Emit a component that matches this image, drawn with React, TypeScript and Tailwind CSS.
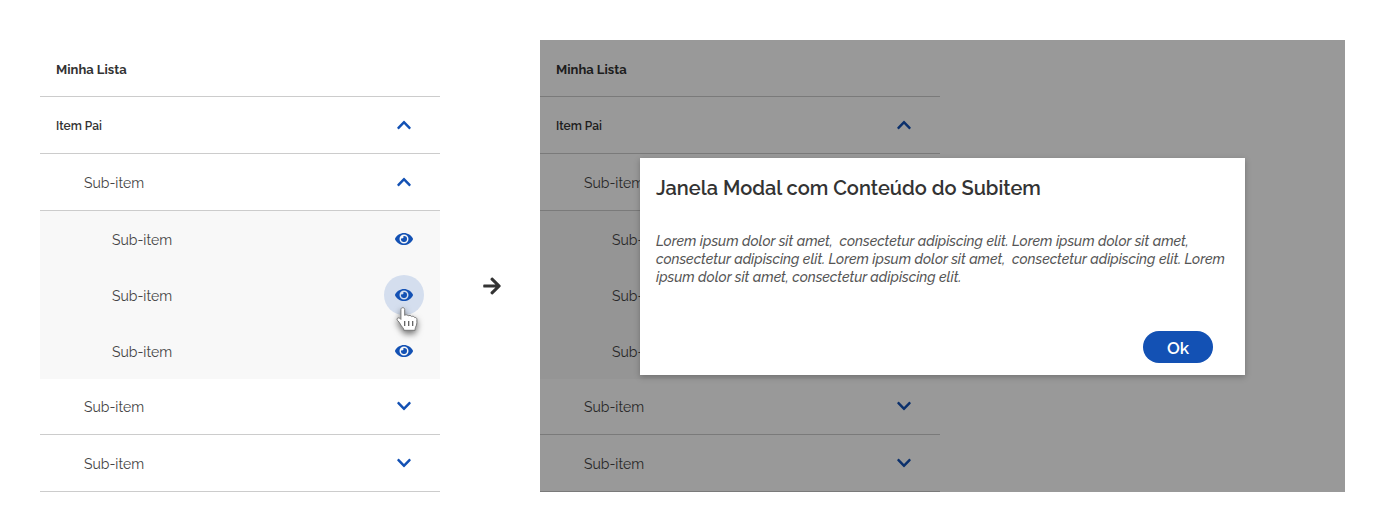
import { FaArrowRight, FaChevronDown, FaChevronUp, FaEye } from "react-icons/fa";

function HandCursor() {
  return (
    <svg
      viewBox="0 0 22 25"
      aria-hidden="true"
      className="pointer-events-none absolute top-8 left-3 h-[25px] w-[22px] drop-shadow-[0_3px_3px_rgba(0,0,0,0.55)]"
    >
      <path
        d="M4.9 2.4C4.9 1.3 5.8 .7 6.8 .7s1.9 .6 1.9 1.7V8.4c.6-.9 3-.8 3.5 .5 .7-.8 3-.6 3.5 .7 .8-.6 2.6-.3 3 1 1.1-.3 2.2 .4 2.2 1.8v3.4c0 1.8-.6 2.9-1.2 4.1-.4 .9-.6 1.7-.6 3.4H7.9c0-1.2-.5-2-1.3-2.9-1-1.2-1.7-2-2.3-3.3-.7-1.5-1.8-2.6-2.9-3.8-1.1-1.4 .3-3.1 1.9-2.3 .7 .4 1.2 .9 1.6 1.4Z"
        fill="#fff"
        stroke="#777"
        strokeWidth="1"
        strokeLinejoin="round"
      />
      <path d="M8.7 14v5M12.7 14v5M16.7 14v5" stroke="#555" strokeWidth="1.2" />
    </svg>
  );
}

function ToggleRow({
  label,
  open = false,
  className = "h-[57px] pl-11 text-sm font-normal",
}: {
  label: string;
  open?: boolean;
  className?: string;
}) {
  const Icon = open ? FaChevronUp : FaChevronDown;
  return (
    <li>
      <button
        type="button"
        aria-expanded={open}
        className={"flex w-full items-center justify-between border-b border-[#ccc] pr-7 text-left " + className}
      >
        <span className="pt-0.5">{label}</span>
        <span className="flex w-4 justify-center text-[#1351b4]">
          <Icon size={16} />
        </span>
      </button>
    </li>
  );
}

function ViewRow({ hovered = false }: { hovered?: boolean }) {
  return (
    <li className="flex h-14 items-center justify-between pr-4 pl-[72px] text-sm">
      <span className="pt-0.5">Sub-item</span>
      <div className="relative">
        <button
          type="button"
          aria-label="Visualizar sub-item"
          className={
            hovered
              ? "flex size-10 items-center justify-center rounded-full bg-[#d4deee] text-[#1351b4]"
              : "flex size-10 items-center justify-center rounded-full text-[#1351b4]"
          }
        >
          <FaEye size={18} />
        </button>
        {hovered && <HandCursor />}
      </div>
    </li>
  );
}

function ItemList({ hover = false }: { hover?: boolean }) {
  return (
    <section className="w-full max-w-[400px] text-[#444]">
      <h2 className="flex h-[57px] items-center border-b border-[#ccc] pt-1 pl-4 text-[13px] font-bold text-[#333]">
        Minha Lista
      </h2>
      <ul>
        <ToggleRow label="Item Pai" open className="h-[57px] pl-4 text-xs font-semibold text-[#333]" />
        <ToggleRow label="Sub-item" open />
        <li>
          <ul className="bg-[#f8f8f8]">
            <ViewRow />
            <ViewRow hovered={hover} />
            <ViewRow />
          </ul>
        </li>
        <ToggleRow label="Sub-item" className="h-14 pb-0.5 pl-11 text-sm font-normal" />
        <ToggleRow label="Sub-item" />
      </ul>
    </section>
  );
}

function Modal() {
  return (
    <div
      role="dialog"
      aria-labelledby="modal-title"
      className="w-full max-w-[605px] bg-white px-4 pt-4 pb-3 shadow-[0_2px_6px_rgba(0,0,0,0.25)]"
    >
      <h2 id="modal-title" className="text-xl leading-7 font-semibold text-[#333]">
        Janela Modal com Conteúdo do Subitem
      </h2>
      <p className="mt-[30px] text-sm leading-[18px] font-medium text-[#555] italic">
        Lorem ipsum dolor sit amet,&nbsp; consectetur adipiscing elit. Lorem ipsum dolor sit amet,
        <br />
        consectetur adipiscing elit. Lorem ipsum dolor sit amet,&nbsp; consectetur adipiscing elit. Lorem
        <br />
        ipsum dolor sit amet, consectetur adipiscing elit.
      </p>
      <div className="mt-[45px] flex justify-end pr-4">
        <button
          type="button"
          className="h-8 w-[70px] rounded-full bg-[#1351b4] pt-1 text-[17px] font-semibold text-white"
        >
          Ok
        </button>
      </div>
    </div>
  );
}

export default function App() {
  return (
    <main className="flex items-start bg-white p-10 font-['Raleway','Lato',sans-serif]">
      <div className="w-[400px] shrink-0">
        <ItemList hover />
      </div>
      <div className="flex w-[100px] shrink-0 justify-center self-stretch pt-[236px] pl-1 text-[#333]">
        <FaArrowRight size={20} />
      </div>
      <div className="relative min-w-0 flex-1">
        <ItemList />
        <div className="absolute inset-0 flex items-start justify-center bg-black/40 px-[100px] pt-[118px]">
          <Modal />
        </div>
      </div>
    </main>
  );
}
